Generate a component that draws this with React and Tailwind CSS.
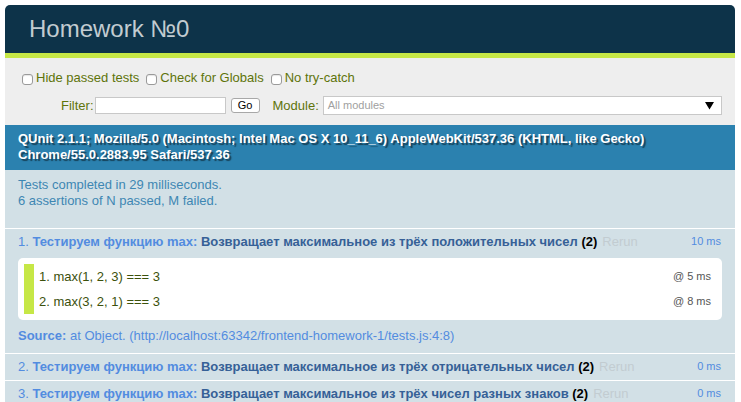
import React from 'react';

const tests = [
    { n: 1, name: 'Возвращает максимальное из трёх положительных чисел', time: '10 ms', open: true },
    { n: 2, name: 'Возвращает максимальное из трёх отрицательных чисел', time: '0 ms' },
    { n: 3, name: 'Возвращает максимальное из трёх чисел разных знаков', time: '0 ms' },
];

const asserts = [
    { text: 'max(1, 2, 3) === 3', time: '@ 5 ms' },
    { text: 'max(3, 2, 1) === 3', time: '@ 8 ms' },
];

const Check = ({ label }) => (
    <label className="flex items-center mr-[7px]">
        <span className="w-[11px] h-[11px] bg-white border border-[#9a9a9a] rounded-[3px] mr-[3px] mt-[3px] shadow-[inset_0_1px_1px_rgba(0,0,0,0.1)]"></span>
        <span>{label}</span>
    </label>
);

const TestItem = ({ test }) => (
    <li className="bg-[#D2E0E6] text-[#528CE0] border-b border-white px-[13px] pt-[5px] pb-[5px] list-none">
        <div className="flex items-start h-[16px] leading-[16px]">
            <div className="flex-1 whitespace-nowrap">
                <span>{test.n}. </span>
                <strong className="font-bold text-[#528CE0]">Тестируем функцию max: </strong>
                <strong className="font-bold text-[#366097]">{test.name}</strong>
                <b className="font-bold text-black"> (2)</b>
                <span className="text-[#C2CCD1] pl-[5px]">Rerun</span>
            </div>
            <span className="text-[11px] leading-[14px] text-[#528CE0] mr-[1px]">{test.time}</span>
        </div>
        {test.open && (
            <>
                <ol className="mt-[8px] bg-white rounded-[5px] p-[6px]">
                    {asserts.map((a, i) => (
                        <li key={i} className="flex items-center justify-between border-l-[10px] border-[#C6E746] px-[5px] h-[25px] text-[#3C510C]">
                            <span>{i + 1}. {a.text}</span>
                            <span className="text-[11px] text-[#555]">{a.time}</span>
                        </li>
                    ))}
                </ol>
                <p className="mt-[8px] mb-[4px] leading-[16px]">
                    <strong className="font-bold">Source: </strong>
                    at Object. (http://localhost:63342/frontend-homework-1/tests.js:4:8)
                </p>
            </>
        )}
    </li>
);

const App = () => {
    return (
        <div className="min-h-screen bg-white pt-[5px] pl-[5px] pr-[6px] font-['Liberation_Sans',Arial,sans-serif] text-[13px]">
            <h1 className="bg-[#0D3349] text-[#C2CCD1] text-[24px] leading-[24px] font-normal h-[48px] pt-[12px] pl-[24px] rounded-t-[5px]">
                Homework №0
            </h1>
            <div className="h-[5px] bg-[#C6E746]"></div>

            <div className="bg-[#EEEEEE] text-[#5E740B] h-[67px] pl-[17px] pr-[13px]">
                <div className="flex items-center h-[19px] pt-[10px] box-content leading-[16px]">
                    <Check label="Hide passed tests" />
                    <Check label="Check for Globals" />
                    <Check label="No try-catch" />
                </div>
                <div className="flex items-center mt-[9px] h-[19px]">
                    <span className="ml-[39px] mr-[1px]">Filter:</span>
                    <span className="w-[131px] h-[17px] bg-white border border-[#c8c8c8]"></span>
                    <button className="ml-[5px] w-[29px] h-[15px] bg-white border border-[#a8a8a8] rounded-[3px] text-[11px] leading-[13px] text-black">
                        Go
                    </button>
                    <span className="ml-[13px] mr-[4px]">Module:</span>
                    <div className="flex-1 h-[19px] bg-white border border-[#c8c8c8] flex items-center justify-between pl-[4px] pr-[7px]">
                        <span className="text-[11px] text-[#a0a0a0]">All modules</span>
                        <svg width="9" height="9" viewBox="0 0 9 9">
                            <polygon points="0,1 9,1 4.5,8.5" fill="#000" />
                        </svg>
                    </div>
                </div>
            </div>

            <div className="bg-[#2B81AF] text-white font-bold leading-[16px] px-[13px] py-[6px] h-[45px] [text-shadow:rgba(0,0,0,0.5)_2px_2px_1px]">
                QUnit 2.1.1; Mozilla/5.0 (Macintosh; Intel Mac OS X 10_11_6) AppleWebKit/537.36 (KHTML, like Gecko) Chrome/55.0.2883.95 Safari/537.36
            </div>

            <div className="bg-[#D2E0E6] text-[#3E87B3] border-b border-white px-[13px] pt-[7px] h-[59px] leading-[16px]">
                <div>Tests completed in 29 milliseconds.</div>
                <div>6 assertions of N passed, M failed.</div>
            </div>

            <ol>
                {tests.map((t) => (
                    <TestItem key={t.n} test={t} />
                ))}
            </ol>
        </div>
    );
};

export default App;
